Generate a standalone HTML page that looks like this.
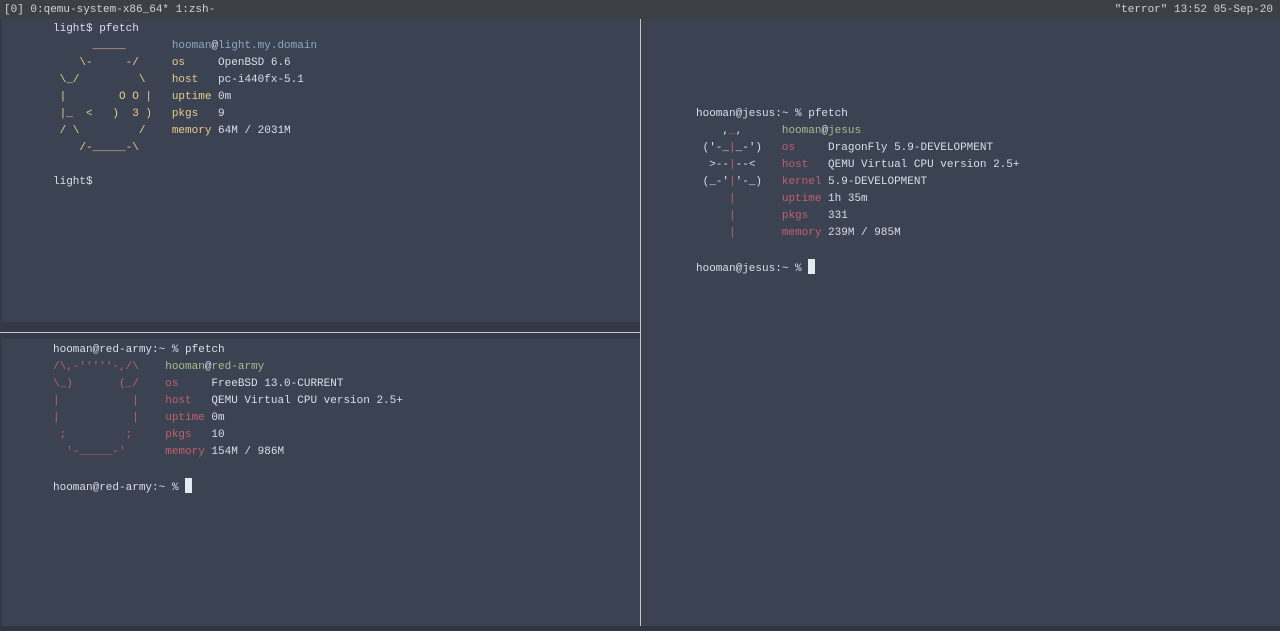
<!DOCTYPE html>
<html><head><meta charset="utf-8"><style>
body{margin:0;width:1280px;height:631px;background:#3b4252;overflow:hidden;position:relative;font-family:"Liberation Mono","DejaVu Sans Mono",monospace;font-size:11px;color:#d8dee9}
.bar{position:absolute;left:0;top:0;width:1280px;height:19px;background:#3d3f45;color:#cfd3d6;line-height:20px;font-size:11px}
pre{margin:0;font:inherit;line-height:17px;position:absolute;white-space:pre}
.y{color:#ebcb8b}.b{color:#8fa6c4}.r{color:#bf616a}.g{color:#a3be8c}.w{color:#d8dee9}
.cur{display:inline-block;width:7px;height:15px;background:#e5e9f0;vertical-align:-3px}
</style></head><body>
<div class="bar"><span style="position:absolute;left:4px">[0] 0:qemu-system-x86_64* 1:zsh-</span><span style="position:absolute;right:7px">"terror" 13:52 05-Sep-20</span></div>
<div style="position:absolute;left:0;top:19px;width:2px;height:612px;background:#343a46"></div>
<div style="position:absolute;left:0;top:322px;width:640px;height:10px;background:#333946"></div>
<div style="position:absolute;left:0;top:332px;width:640px;height:1px;background:#c3c7c9"></div>
<div style="position:absolute;left:0;top:333px;width:640px;height:6px;background:#343a47"></div>
<div style="position:absolute;left:640px;top:19px;width:1px;height:612px;background:#c3c7bd"></div>
<div style="position:absolute;left:0;top:626px;width:1280px;height:5px;background:#30363f"></div>

<pre style="left:53px;top:21px">light$ pfetch
<span class="y">      _____       </span><span class="b">hooman</span>@<span class="b">light.my.domain</span>
<span class="y">    \-     -/     os</span>     OpenBSD 6.6
<span class="y"> \_/         \    host</span>   pc-i440fx-5.1
<span class="y"> |        O O |   uptime</span> 0m
<span class="y"> |_  &lt;   )  3 )   pkgs</span>   9
<span class="y"> / \         /    memory</span> 64M / 2031M
<span class="y">    /-_____-\</span>

light$</pre>

<pre style="left:53px;top:342px">hooman@red-army:~ % pfetch
<span class="r">/\,-'''''-,/\    </span><span class="g">hooman</span>@<span class="g">red-army</span>
<span class="r">\_)       (_/    os</span>     FreeBSD 13.0-CURRENT
<span class="r">|           |    host</span>   QEMU Virtual CPU version 2.5+
<span class="r">|           |    uptime</span> 0m
<span class="r"> ;         ;     pkgs</span>   10
<span class="r">  '-_____-'      memory</span> 154M / 986M

hooman@red-army:~ % <span class="cur"></span></pre>

<pre style="left:696px;top:106px">hooman@jesus:~ % pfetch
    ,<span class="r">_</span>,      <span class="g">hooman</span>@<span class="g">jesus</span>
 ('-_<span class="r">|</span>_-')   <span class="r">os</span>     DragonFly 5.9-DEVELOPMENT
  &gt;--<span class="r">|</span>--&lt;    <span class="r">host</span>   QEMU Virtual CPU version 2.5+
 (_-'<span class="r">|</span>'-_)   <span class="r">kernel</span> 5.9-DEVELOPMENT
     <span class="r">|</span>       <span class="r">uptime</span> 1h 35m
     <span class="r">|</span>       <span class="r">pkgs</span>   331
     <span class="r">|</span>       <span class="r">memory</span> 239M / 985M

hooman@jesus:~ % <span class="cur"></span></pre>
</body></html>
